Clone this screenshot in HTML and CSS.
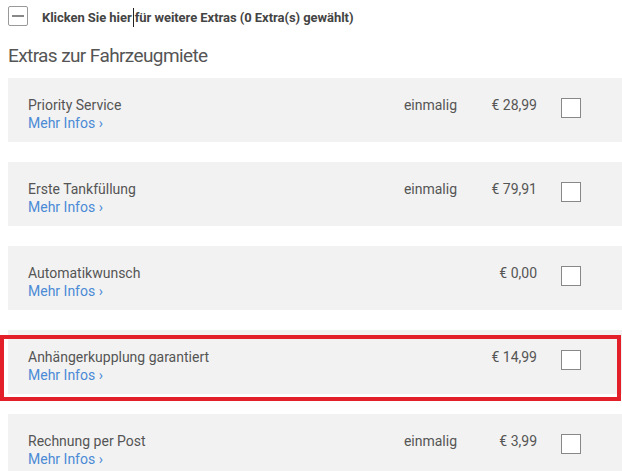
FILE: index.html
```html
<!DOCTYPE html>
<html lang="de">
<head>
<meta charset="UTF-8">
<meta name="viewport" content="width=device-width, initial-scale=1.0">
<title>Extras zur Fahrzeugmiete</title>
<link rel="stylesheet" href="styles.css">
</head>
<body>
  <div class="page">
    <div class="toggle-row">
      <span class="toggle-box"></span>
      <span class="toggle-text">Klicken Sie hier<span class="caret"></span>für weitere Extras (0 Extra(s) gewählt)</span>
    </div>

    <h2 class="title">Extras zur Fahrzeugmiete</h2>

    <div class="extras">
      <div class="extra">
        <div class="extra-info">
          <div class="extra-name">Priority Service</div>
          <a class="more" href="#">Mehr Infos ›</a>
        </div>
        <div class="extra-freq">einmalig</div>
        <div class="extra-price">€ 28,99</div>
        <span class="check"></span>
      </div>

      <div class="extra">
        <div class="extra-info">
          <div class="extra-name">Erste Tankfüllung</div>
          <a class="more" href="#">Mehr Infos ›</a>
        </div>
        <div class="extra-freq">einmalig</div>
        <div class="extra-price">€ 79,91</div>
        <span class="check"></span>
      </div>

      <div class="extra">
        <div class="extra-info">
          <div class="extra-name">Automatikwunsch</div>
          <a class="more" href="#">Mehr Infos ›</a>
        </div>
        <div class="extra-freq"></div>
        <div class="extra-price">€ 0,00</div>
        <span class="check"></span>
      </div>

      <div class="extra marked">
        <div class="extra-info">
          <div class="extra-name">Anhängerkupplung garantiert</div>
          <a class="more" href="#">Mehr Infos ›</a>
        </div>
        <div class="extra-freq"></div>
        <div class="extra-price">€ 14,99</div>
        <span class="check"></span>
      </div>

      <div class="extra">
        <div class="extra-info">
          <div class="extra-name">Rechnung per Post</div>
          <a class="more" href="#">Mehr Infos ›</a>
        </div>
        <div class="extra-freq">einmalig</div>
        <div class="extra-price">€ 3,99</div>
        <span class="check"></span>
      </div>
    </div>
  </div>
</body>
</html>
```

FILE: styles.css
```css
body {
  margin: 0;
  font-family: 'Roboto', 'Liberation Sans', sans-serif;
  color: #555;
  background: #fff;
  overflow: hidden;
}
.page {
  padding-left: 8px;
}
.toggle-row {
  display: flex;
  align-items: center;
  height: 34px;
}
.toggle-box {
  position: relative;
  width: 18px;
  height: 18px;
  border: 1px solid #999;
  border-radius: 2px;
  margin-top: -2px;
}
.toggle-box::before {
  content: '';
  position: absolute;
  left: 3px;
  right: 3px;
  top: 8px;
  height: 2px;
  background: #888;
}
.toggle-text {
  margin-left: 14px;
  font-size: 13px;
  font-weight: bold;
  color: #444;
  letter-spacing: -0.05px;
}
.caret {
  display: inline-block;
  width: 1px;
  height: 19px;
  background: #222;
  vertical-align: -5px;
  margin: 0 1px;
}
.title {
  margin: 10px 0 10px;
  font-size: 19px;
  font-weight: normal;
  line-height: 24px;
  color: #555;
  letter-spacing: -0.6px;
}
.extras {
  display: flex;
  flex-direction: column;
  gap: 20px;
}
.extra {
  display: flex;
  align-items: flex-start;
  height: 64px;
  box-sizing: border-box;
  padding: 18px 0 10px 20px;
  background: #f2f2f2;
  font-size: 14px;
}
.extra-info {
  flex: 1;
  line-height: 18px;
}
.extra-name {
  color: #555;
}
.more {
  color: #4a8ad6;
  text-decoration: none;
}
.extra-freq {
  width: 80px;
  text-align: right;
  line-height: 18px;
}
.extra-price {
  width: 80px;
  text-align: right;
  line-height: 18px;
}
.check {
  width: 18px;
  height: 18px;
  border: 1px solid #888;
  background: #fff;
  margin: 2px 41px 0 24px;
}
.marked {
  position: relative;
}
.marked::after {
  content: '';
  position: absolute;
  left: -8px;
  right: 1px;
  top: 5px;
  bottom: -7px;
  border: 4px solid #e3202a;
  pointer-events: none;
}
```
